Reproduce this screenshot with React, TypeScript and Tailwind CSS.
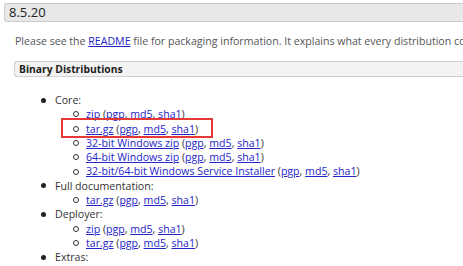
import React from "react";

const A = ({ children }: { children: React.ReactNode }) => (
  <a className="text-[#2424c8] underline decoration-[1px] underline-offset-[1px]">{children}</a>
);

const Sigs = () => (
  <>
    {" "}(<A>pgp</A>, <A>md5</A>, <A>sha1</A>)
  </>
);

const Top = ({ children }: { children: React.ReactNode }) => (
  <div className="flex items-center h-[14.3px]">
    <span className="ml-[41px] w-[5px] h-[5px] rounded-full bg-[#222]" />
    <span className="ml-[9px] text-[#333]">{children}</span>
  </div>
);

const Sub = ({ children }: { children: React.ReactNode }) => (
  <div className="flex items-center h-[14.3px]">
    <span className="ml-[73px] w-[6px] h-[6px] rounded-full border border-[#333]" />
    <span className="ml-[7px] text-[#333]">{children}</span>
  </div>
);

export default function App() {
  return (
    <div className="relative w-[463px] h-[266px] overflow-hidden bg-white font-['Open_Sans',sans-serif] whitespace-nowrap">
      <div className="ml-[4px] mt-[3px] h-[19px] bg-[#e8e8e8] border-y border-l border-[#cbcbcb] rounded-l-[3px] pl-[4px] text-[13px] leading-[17px] text-[#222]">
        8.5.20
      </div>
      <p className="ml-[15px] mt-[12px] text-[10.6px] leading-[15px] text-[#555]">
        Please see the <A>README</A> file for packaging information. It explains what every distribution contains.
      </p>
      <div className="ml-[14px] mt-[12px] h-[16px] bg-[#f3f3f3] border-y border-l border-[#cfcfcf] rounded-l-[3px] pl-[4px] text-[10.3px] leading-[14px] font-bold text-[#222]">
        Binary Distributions
      </div>
      <div className="mt-[16px] text-[10.6px] leading-[14.3px]">
        <Top>Core:</Top>
        <Sub><A>zip</A><Sigs /></Sub>
        <Sub><A>tar.gz</A><Sigs /></Sub>
        <Sub><A>32-bit Windows zip</A><Sigs /></Sub>
        <Sub><A>64-bit Windows zip</A><Sigs /></Sub>
        <Sub><A>32-bit/64-bit Windows Service Installer</A><Sigs /></Sub>
        <Top>Full documentation:</Top>
        <Sub><A>tar.gz</A><Sigs /></Sub>
        <Top>Deployer:</Top>
        <Sub><A>zip</A><Sigs /></Sub>
        <Sub><A>tar.gz</A><Sigs /></Sub>
        <Top>Extras:</Top>
      </div>
      <div className="absolute left-[61px] top-[118px] w-[152px] h-[20px] border-2 border-[#e53935]" />
    </div>
  );
}
